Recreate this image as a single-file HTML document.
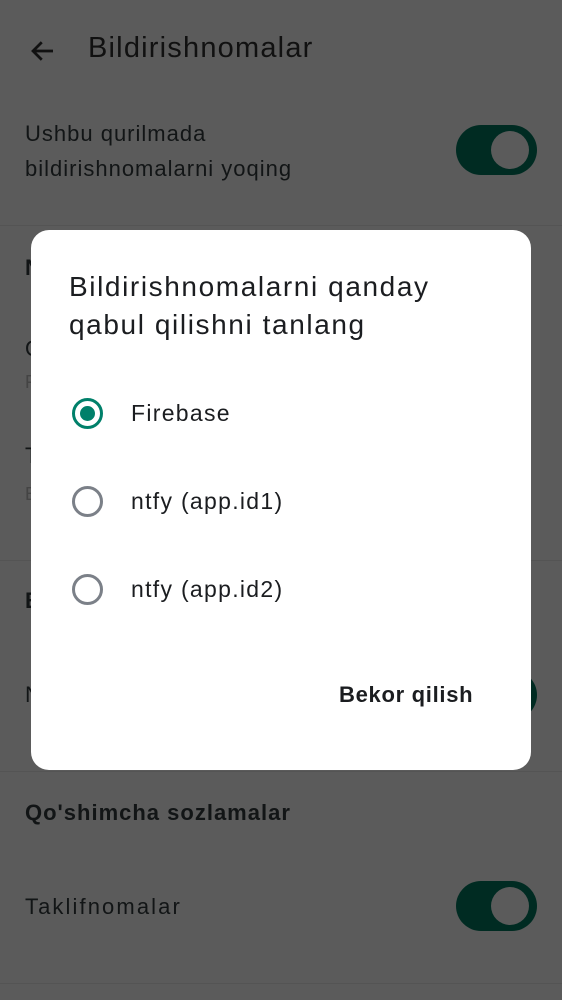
<!DOCTYPE html>
<html><head><meta charset="utf-8">
<style>
*{margin:0;padding:0;box-sizing:border-box}
body{width:562px;height:1000px;background:#5b5b5b;font-family:"Liberation Sans",sans-serif;position:relative;overflow:hidden;color:#121516}
.a{position:absolute;white-space:nowrap}
.div{position:absolute;left:0;width:562px;height:1px;background:#545454}
.tg{position:absolute;width:81px;height:50px;border-radius:25px;background:#002b22}
.th{position:absolute;right:8px;top:6px;width:38px;height:38px;border-radius:50%;background:#5b5b5b}
.dlg{position:absolute;left:31px;top:230px;width:500px;height:540px;background:#fff;border-radius:18px}
.rb{position:absolute;left:72px;width:31px;height:31px;border-radius:50%;border:3px solid #7b8088}
.rb.on{border-color:#00806a}
.rb.on::after{content:"";position:absolute;left:5px;top:5px;width:15px;height:15px;border-radius:50%;background:#00806a}
.opt{position:absolute;left:131px;font-size:23px;color:#1b1d20;letter-spacing:1.3px}
</style></head><body>
<svg class="a" style="left:28px;top:36px" width="30" height="30" viewBox="0 0 24 24"><path d="M20 12H5M11 5l-7 7 7 7" fill="none" stroke="#111" stroke-width="2.2"/></svg>
<div class="a" style="left:88px;top:32px;font-size:29px;letter-spacing:1.2px;color:#111">Bildirishnomalar</div>
<div class="a" style="left:25px;top:116px;font-size:22px;line-height:35px;letter-spacing:1px;color:#121516">Ushbu qurilmada<br>bildirishnomalarni yoqing</div>
<div class="tg" style="left:456px;top:125px"><div class="th"></div></div>
<div class="div" style="top:225px"></div>
<div class="a" style="left:25px;top:255px;font-size:22px;font-weight:bold">N</div>
<div class="a" style="left:25px;top:336px;font-size:22px">O</div>
<div class="a" style="left:25px;top:372px;font-size:18px;color:#444">F</div>
<div class="a" style="left:25px;top:443px;font-size:22px">T</div>
<div class="a" style="left:25px;top:484px;font-size:18px;color:#444">E</div>
<div class="div" style="top:560px"></div>
<div class="a" style="left:25px;top:588px;font-size:22px;font-weight:bold">B</div>
<div class="a" style="left:25px;top:682px;font-size:22px">N</div>
<div class="tg" style="left:456px;top:670px"><div class="th"></div></div>
<div class="div" style="top:771px"></div>
<div class="a" style="left:25px;top:800px;font-size:22px;font-weight:bold;letter-spacing:1px;color:#121516">Qo'shimcha sozlamalar</div>
<div class="a" style="left:25px;top:894px;font-size:22px;letter-spacing:2.1px">Taklifnomalar</div>
<div class="tg" style="left:456px;top:881px"><div class="th"></div></div>
<div class="div" style="top:983px"></div>

<div class="dlg"></div>
<div class="a" style="left:69px;top:268px;font-size:28px;line-height:38px;letter-spacing:1.6px;color:#1b1d20">Bildirishnomalarni qanday<br>qabul qilishni tanlang</div>
<div class="rb on" style="top:398px"></div>
<div class="opt" style="top:400px">Firebase</div>
<div class="rb" style="top:486px"></div>
<div class="opt" style="top:488px">ntfy (app.id1)</div>
<div class="rb" style="top:574px"></div>
<div class="opt" style="top:576px">ntfy (app.id2)</div>
<div class="a" style="left:339px;top:682px;font-size:22px;font-weight:bold;letter-spacing:.7px;color:#1b1d20">Bekor qilish</div>
</body></html>
